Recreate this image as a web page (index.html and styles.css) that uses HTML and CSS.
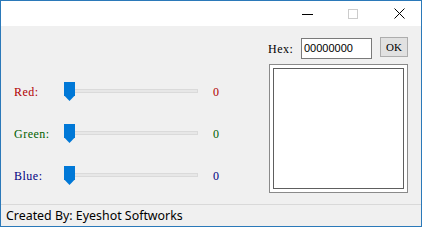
FILE: index.html
```html
<!DOCTYPE html>
<html>
<head>
<meta charset="utf-8">
<link rel="stylesheet" href="styles.css">
</head>
<body>
<div class="window">
  <div class="titlebar">
    <div class="tb-btn">
      <svg width="12" height="12" viewBox="0 0 12 12"><path d="M0 6.5H11" stroke="#000" stroke-width="1"/></svg>
    </div>
    <div class="tb-btn">
      <svg width="12" height="12" viewBox="0 0 12 12"><rect x="0.5" y="0.5" width="9" height="9" fill="none" stroke="#cccccc" stroke-width="1"/></svg>
    </div>
    <div class="tb-btn">
      <svg width="12" height="12" viewBox="0 0 12 12"><path d="M0.5 0.5L10.5 10.5M10.5 0.5L0.5 10.5" stroke="#000" stroke-width="1"/></svg>
    </div>
  </div>
  <div class="main">
    <div class="sliders">
      <div class="row red">
        <span class="label">Red:</span>
        <div class="slider"><div class="track"></div><div class="thumb"></div></div>
        <span class="value">0</span>
      </div>
      <div class="row green">
        <span class="label">Green:</span>
        <div class="slider"><div class="track"></div><div class="thumb"></div></div>
        <span class="value">0</span>
      </div>
      <div class="row blue">
        <span class="label">Blue:</span>
        <div class="slider"><div class="track"></div><div class="thumb"></div></div>
        <span class="value">0</span>
      </div>
    </div>
    <div class="right">
      <div class="hexrow">
        <span class="hexlabel">Hex:</span>
        <div class="hexinput">00000000</div>
        <div class="okbtn">OK</div>
      </div>
      <div class="preview"><div class="preview-inner"></div></div>
    </div>
  </div>
  <div class="status">Created By: Eyeshot Softworks</div>
</div>
</body>
</html>
```
FILE: styles.css
```css
html, body {
  margin: 0;
  padding: 0;
}
.window {
  width: 422px;
  height: 227px;
  box-sizing: border-box;
  border: 1px solid #2b79b9;
  background: #f0f0f0;
  display: flex;
  flex-direction: column;
}
.titlebar {
  height: 25px;
  background: #ffffff;
  display: flex;
  justify-content: flex-end;
  flex-shrink: 0;
}
.tb-btn {
  width: 46px;
  height: 25px;
  display: flex;
  align-items: center;
  justify-content: center;
  box-sizing: border-box;
}
.titlebar .tb-btn:nth-child(1) { width: 38px; padding-top: 1px; }
.titlebar .tb-btn:nth-child(2) { width: 48px; padding-top: 3px; padding-left: 5px; }
.titlebar .tb-btn:nth-child(3) { width: 46px; padding-top: 1px; padding-left: 3px; }
.main {
  flex: 1;
  display: flex;
}
.sliders {
  width: 254px;
  padding-left: 13px;
  padding-top: 56px;
  display: flex;
  flex-direction: column;
  gap: 22px;
}
.row {
  height: 20px;
  display: flex;
  align-items: center;
  font-family: "Liberation Serif", serif;
  font-size: 12px;
  letter-spacing: 0.5px;
}
.label {
  width: 50px;
  padding-top: 1px;
}
.red { color: #b00000; }
.green { color: #006000; }
.blue { color: #000080; }
.slider {
  position: relative;
  width: 134px;
  height: 20px;
}
.track {
  position: absolute;
  left: 0;
  right: 0;
  top: 7px;
  height: 2px;
  background: #e7e7e7;
  border: 1px solid #dadada;
  border-left: none;
}
.thumb {
  position: absolute;
  left: 0;
  top: 0;
  width: 11px;
  height: 19px;
  background: #0078d7;
  clip-path: polygon(0 0, 100% 0, 100% 70%, 50% 100%, 0 70%);
}
.value {
  margin-left: 15px;
  padding-top: 1px;
}
.right {
  padding-top: 11px;
  display: flex;
  flex-direction: column;
}
.hexrow {
  display: flex;
  align-items: flex-start;
  height: 27px;
}
.hexlabel {
  font-family: "Liberation Serif", serif;
  font-size: 12px;
  letter-spacing: 0.5px;
  color: #000;
  width: 33px;
  margin-top: 5px;
}
.hexinput {
  width: 67px;
  height: 19px;
  border: 1px solid #7a7a7a;
  background: #fff;
  font-family: "Liberation Sans", sans-serif;
  font-size: 11px;
  line-height: 19px;
  padding-left: 2px;
  margin-top: 1px;
}
.okbtn {
  margin-left: 8px;
  width: 26px;
  height: 18px;
  border: 1px solid #adadad;
  background: #e1e1e1;
  font-family: "Liberation Serif", serif;
  font-size: 11px;
  line-height: 18px;
  text-align: center;
}
.preview {
  margin-left: 1px;
  width: 131px;
  height: 121px;
  border: 1px solid #8a8a8a;
  background: #fff;
  padding: 3px;
}
.preview-inner {
  width: 129px;
  height: 119px;
  border: 1px solid #5e5e5e;
  background: #fff;
}
.status {
  height: 21px;
  border-top: 1px solid #d9d9d9;
  flex-shrink: 0;
  font-family: "Noto Sans", sans-serif;
  font-size: 12.4px;
  line-height: 21px;
  padding-left: 5px;
  color: #000;
}
```
